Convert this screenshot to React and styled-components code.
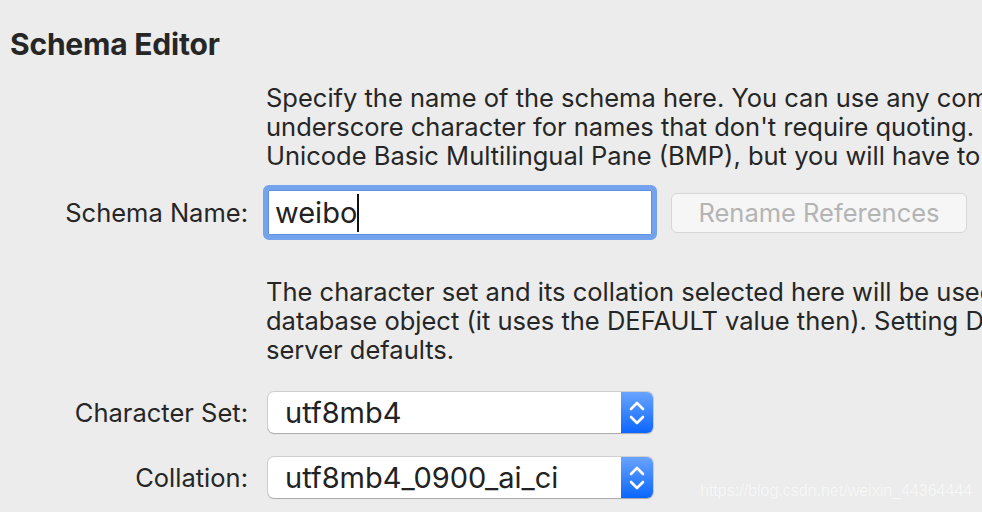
import React from "react";
import styled, { createGlobalStyle } from "styled-components";

const Global = createGlobalStyle`
  html, body { margin: 0; padding: 0; background: #ececec; }
  body { width: 982px; height: 512px; overflow: hidden; }
`;

const Page = styled.div`
  position: relative;
  width: 982px;
  height: 512px;
  box-sizing: border-box;
  padding: 27px 0 0 10px;
  background: #ececec;
  font-family: Inter, "Liberation Sans", sans-serif;
  color: #262626;
  overflow: hidden;
`;

const Title = styled.h1`
  margin: 0;
  font-size: 30px;
  font-weight: 700;
  line-height: 34px;
  letter-spacing: -0.2px;
  color: #262626;
`;

const Form = styled.div`
  display: grid;
  grid-template-columns: 238px 1fr;
  column-gap: 18px;
  margin-top: 22px;
`;

const Label = styled.div`
  grid-column: 1;
  display: flex;
  align-items: center;
  justify-content: flex-end;
  font-size: 25.5px;
  color: #262626;
  height: ${(p) => p.h}px;
  margin-top: ${(p) => p.mt || 0}px;
`;

const Control = styled.div`
  grid-column: 2;
  display: flex;
  align-items: center;
  gap: 14px;
  height: ${(p) => p.h}px;
  margin-top: ${(p) => p.mt || 0}px;
  margin-left: ${(p) => p.ml || 0}px;
`;

const Desc = styled.p`
  grid-column: 2;
  margin: ${(p) => p.mt}px 0 0 0;
  font-size: 25.5px;
  line-height: 29px;
  color: #262626;
  white-space: nowrap;
`;

const FocusRing = styled.div`
  width: 394px;
  height: 55px;
  box-sizing: border-box;
  border: 5px solid #74a3ee;
  border-radius: 6px;
  background: #fff;
  display: flex;
  align-items: center;
  padding-left: 7px;
  box-shadow: inset 0 0 0 1px #5f90e4;
`;

const InputText = styled.span`
  font-size: 29px;
  color: #222;
  line-height: 32px;
`;

const Caret = styled.span`
  display: inline-block;
  width: 2px;
  height: 38px;
  background: #111;
`;

const Button = styled.div`
  width: 296px;
  height: 40px;
  box-sizing: border-box;
  border: 1px solid #d6d6d6;
  border-radius: 6px;
  background: #f6f6f6;
  color: #b4b4b4;
  font-size: 25.5px;
  display: flex;
  align-items: center;
  justify-content: center;
`;

const Select = styled.div`
  width: 385px;
  height: 41px;
  box-sizing: border-box;
  display: flex;
  border-radius: 6px;
  background: #fff;
  box-shadow: 0 0 0 1px rgba(0, 0, 0, 0.12), 0 1px 1px rgba(0, 0, 0, 0.18);
  overflow: hidden;
`;

const SelectValue = styled.div`
  flex: 1;
  display: flex;
  align-items: center;
  padding-left: 17px;
  font-size: 29px;
  color: #222;
`;

const Stepper = styled.div`
  width: 32px;
  background: linear-gradient(#69a4ff, #0b66ff);
  display: flex;
  align-items: center;
  justify-content: center;
`;

const Watermark = styled.div`
  position: absolute;
  left: 700px;
  top: 482px;
  font-family: "Liberation Sans", Arial, sans-serif;
  font-size: 16px;
  color: rgba(255, 255, 255, 0.75);
  text-shadow: 0 0 1px rgba(0, 0, 0, 0.05);
  white-space: nowrap;
`;

const Arrows = () => (
  <svg width="20" height="30" viewBox="0 0 20 30" fill="none">
    <path d="M4 11 L10 5 L16 11" stroke="#fff" strokeWidth="2.6" strokeLinecap="round" strokeLinejoin="round" />
    <path d="M4 19 L10 25 L16 19" stroke="#fff" strokeWidth="2.6" strokeLinecap="round" strokeLinejoin="round" />
  </svg>
);

export default function App() {
  return (
    <>
      <Global />
      <Page>
        <Title>Schema Editor</Title>
        <Form>
          <Desc mt={0}>
            Specify the name of the schema here. You can use any combination of ANSI letters, numbers and the
            <br />
            underscore character for names that don't require quoting.
            <br />
            Unicode Basic Multilingual Pane (BMP), but you will have to quote names then.
          </Desc>
          <Label h={55} mt={15}>Schema Name:</Label>
          <Control h={55} mt={15} ml={-3}>
            <FocusRing>
              <InputText>weibo</InputText>
              <Caret />
            </FocusRing>
            <Button>Rename References</Button>
          </Control>
          <Desc mt={37}>
            The character set and its collation selected here will be used when no other charset or collation is set for a
            <br />
            database object (it uses the DEFAULT value then). Setting DEFAULT here will make the schema use the
            <br />
            server defaults.
          </Desc>
          <Label h={41} mt={28}>Character Set:</Label>
          <Control h={41} mt={28} ml={2}>
            <Select>
              <SelectValue>utf8mb4</SelectValue>
              <Stepper><Arrows /></Stepper>
            </Select>
          </Control>
          <Label h={41} mt={24}>Collation:</Label>
          <Control h={41} mt={24} ml={2}>
            <Select>
              <SelectValue>utf8mb4_0900_ai_ci</SelectValue>
              <Stepper><Arrows /></Stepper>
            </Select>
          </Control>
        </Form>
        <Watermark>https://blog.csdn.net/weixin_44364444</Watermark>
      </Page>
    </>
  );
}
